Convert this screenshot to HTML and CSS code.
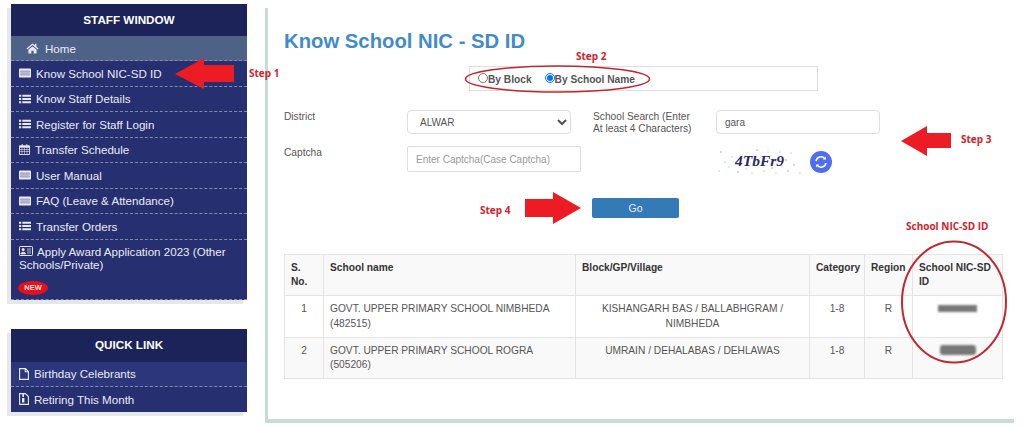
FILE: index.html
```html
<!DOCTYPE html>
<html lang="en">
<head>
   <meta charset="utf-8">
   <meta content="width=device-width, initial-scale=1.0" name="viewport">
   <title>Know School NIC - SD ID</title>
   <link rel="stylesheet" href="styles.css">
</head>
<body>
   <svg class="icon-defs" width="0" height="0">
      <symbol id="i-home" viewBox="0 0 16 14">
         <path d="M8 0.5 L0.3 7 L1.3 8.2 L8 2.6 L14.7 8.2 L15.7 7 L13 4.7 V1 H11 V3 Z M2.8 8.6 V13.5 H6.5 V9.8 H9.5 V13.5 H13.2 V8.6 L8 4.3 Z" fill="currentColor"/>
      </symbol>
      <symbol id="i-card" viewBox="0 0 13 10">
         <rect x="0" y="0" width="13" height="10" rx="1" fill="currentColor"/>
         <path d="M1.2 3 H11.8 M1.2 5 H11.8 M1.2 7 H11.8" stroke="#6a7197" stroke-width="0.9"/>
      </symbol>
      <symbol id="i-list" viewBox="0 0 13 10">
         <path d="M0 0.3 H2.4 V2.5 H0 Z M0 3.9 H2.4 V6.1 H0 Z M0 7.5 H2.4 V9.7 H0 Z M3.6 0.3 H13 V2.5 H3.6 Z M3.6 3.9 H13 V6.1 H3.6 Z M3.6 7.5 H13 V9.7 H3.6 Z" fill="currentColor"/>
      </symbol>
      <symbol id="i-calendar" viewBox="0 0 12 12">
         <path d="M0.5 2 H11.5 V11.5 H0.5 Z" fill="none" stroke="currentColor"/>
         <path d="M0.5 2 H11.5 V4 H0.5 Z M3 0 H4 V2.5 H3 Z M8 0 H9 V2.5 H8 Z" fill="currentColor"/>
         <path d="M0.5 6 H11.5 M0.5 8.2 H11.5 M3.2 4 V11.5 M6 4 V11.5 M8.8 4 V11.5" stroke="currentColor" stroke-width="0.6"/>
      </symbol>
      <symbol id="i-id" viewBox="0 0 14 10">
         <rect x="0.5" y="0.5" width="13" height="9" rx="0.8" fill="none" stroke="currentColor"/>
         <circle cx="4.2" cy="3.6" r="1.5" fill="currentColor"/>
         <path d="M1.8 8 C1.8 5.6 6.6 5.6 6.6 8 Z M8 3 H12 M8 5 H12 M8 7 H12" fill="currentColor" stroke="currentColor" stroke-width="0.7"/>
      </symbol>
      <symbol id="i-file" viewBox="0 0 10 12">
         <path d="M0.6 0.6 H6.4 L9.4 3.6 V11.4 H0.6 Z M6.2 0.8 V3.8 H9.2" fill="none" stroke="currentColor" stroke-width="1.1"/>
      </symbol>
      <symbol id="i-file-zip" viewBox="0 0 10 12">
         <path d="M0.6 0.6 H6.4 L9.4 3.6 V11.4 H0.6 Z" fill="none" stroke="currentColor" stroke-width="1.1"/>
         <path d="M3.4 1 H5 V4 H3.4 Z M3 5 H5.4 V9.6 H3 Z" fill="currentColor"/>
      </symbol>
   </svg>

   <div class="page">
      <aside class="sidebar">
         <div class="panel">
            <div class="panel-title">STAFF WINDOW</div>
            <a class="menu-item menu-home"><svg class="ico ico-home"><use href="#i-home"/></svg>Home</a>
            <a class="menu-item"><svg class="ico"><use href="#i-card"/></svg>Know School NIC-SD ID</a>
            <a class="menu-item"><svg class="ico"><use href="#i-list"/></svg>Know Staff Details</a>
            <a class="menu-item"><svg class="ico"><use href="#i-list"/></svg>Register for Staff Login</a>
            <a class="menu-item"><svg class="ico ico-cal"><use href="#i-calendar"/></svg>Transfer Schedule</a>
            <a class="menu-item"><svg class="ico"><use href="#i-card"/></svg>User Manual</a>
            <a class="menu-item"><svg class="ico"><use href="#i-card"/></svg>FAQ (Leave &amp; Attendance)</a>
            <a class="menu-item"><svg class="ico"><use href="#i-list"/></svg>Transfer Orders</a>
            <a class="menu-apply">
               <svg class="ico ico-id"><use href="#i-id"/></svg>Apply Award Application 2023 (Other Schools/Private)
               <span class="new-badge">NEW</span>
            </a>
         </div>
         <div class="panel">
            <div class="panel-title panel-title-quick">QUICK LINK</div>
            <a class="menu-item menu-quick menu-first"><svg class="ico ico-file"><use href="#i-file"/></svg>Birthday Celebrants</a>
            <a class="menu-item menu-quick"><svg class="ico ico-file"><use href="#i-file-zip"/></svg>Retiring This Month</a>
         </div>
      </aside>

      <main class="main">
         <h2 class="title">Know School NIC - SD ID</h2>
         <div class="radio-box">
            <label class="radio-label"><input type="radio" name="mode">By Block</label>
            <label class="radio-label"><input type="radio" name="mode" checked>By School Name</label>
         </div>

         <form class="search-form">
            <label class="field-label">District</label>
            <select class="field field-select"><option>ALWAR</option></select>
            <label class="field-label field-label-wrap">School Search (Enter At least 4 Characters)</label>
            <input class="field" type="text" value="gara">
            <label class="field-label">Captcha</label>
            <input class="field field-captcha" type="text" placeholder="Enter Captcha(Case Captcha)">
            <div class="captcha-wrap">
               <div class="captcha-img">
                  <svg class="captcha-dots" width="87" height="29">
                     <g fill="#8b8fa8">
                        <circle cx="5" cy="5" r=".7"/><circle cx="9" cy="15" r=".6"/><circle cx="3" cy="24" r=".6"/><circle cx="16" cy="10" r=".5"/>
                        <circle cx="22" cy="25" r=".7"/><circle cx="30" cy="22" r=".6"/><circle cx="41" cy="3" r=".7"/><circle cx="48" cy="24" r=".6"/>
                        <circle cx="56" cy="21" r=".7"/><circle cx="64" cy="5" r=".6"/><circle cx="70" cy="13" r=".7"/><circle cx="75" cy="6" r=".6"/>
                        <circle cx="78" cy="18" r=".7"/><circle cx="72" cy="24" r=".7"/><circle cx="84" cy="26" r=".6"/><circle cx="60" cy="26" r=".5"/>
                        <circle cx="36" cy="26" r=".5"/><circle cx="13" cy="20" r=".5"/><circle cx="66" cy="19" r=".5"/><circle cx="52" cy="5" r=".5"/>
                     </g>
                  </svg>
                  <span class="captcha-text">4TbFr9</span>
               </div>
               <button class="refresh" type="button">
                  <svg width="14" height="14" viewBox="0 0 14 14" fill="none" stroke="#fff" stroke-width="1.5">
                     <path d="M2 6 A5 5 0 0 1 11 4"/><path d="M12 8 A5 5 0 0 1 3 10"/>
                     <path d="M11.8 1.6 V4.6 H8.8 Z M2.2 12.4 V9.4 H5.2 Z" fill="#fff" stroke="none"/>
                  </svg>
               </button>
            </div>
         </form>

         <button class="go-btn" type="button">Go</button>

         <table class="result">
            <thead>
               <tr>
                  <th class="col-no">S. No.</th>
                  <th class="col-name">School name</th>
                  <th class="col-block">Block/GP/Village</th>
                  <th class="col-cat">Category</th>
                  <th class="col-reg">Region</th>
                  <th>School NIC-SD ID</th>
               </tr>
            </thead>
            <tbody>
               <tr>
                  <td class="center">1</td>
                  <td>GOVT. UPPER PRIMARY SCHOOL NIMBHEDA (482515)</td>
                  <td class="center">KISHANGARH BAS / BALLABHGRAM / NIMBHEDA</td>
                  <td class="center">1-8</td>
                  <td class="center">R</td>
                  <td class="center"><span class="redact redact-a"></span></td>
               </tr>
               <tr class="row-alt">
                  <td class="center">2</td>
                  <td>GOVT. UPPER PRIMARY SCHOOL ROGRA (505206)</td>
                  <td class="center">UMRAIN / DEHALABAS / DEHLAWAS</td>
                  <td class="center">1-8</td>
                  <td class="center">R</td>
                  <td class="center"><span class="redact redact-b"></span></td>
               </tr>
            </tbody>
         </table>
      </main>
   </div>

   <!-- red notes drawn over the screenshot -->
   <svg class="notes" width="1024" height="428">
      <g fill="#ed1c24">
         <path d="M175 74 L204 58 V65 H234 V82 H204 V89 Z"/>
         <path d="M901 141 L927 126 V133 H951 V148 H927 V156 Z"/>
         <path d="M581 208 L553 192 V199 H525 V217 H553 V224 Z"/>
      </g>
      <g fill="none" stroke="#c1272d">
         <ellipse cx="557.5" cy="79" rx="92" ry="13" stroke-width="1.5"/>
         <ellipse cx="954" cy="302" rx="52" ry="60.5" stroke-width="2"/>
      </g>
   </svg>
   <span class="note note-1">Step 1</span>
   <span class="note note-2">Step 2</span>
   <span class="note note-3">Step 3</span>
   <span class="note note-4">Step 4</span>
   <span class="note note-5">School NIC-SD ID</span>
</body>
</html>
```

FILE: styles.css
```css
* {
    margin: 0;
    padding: 0;
    box-sizing: border-box;
}
body {
    position: relative;
    height: 428px;
    overflow: hidden;
    background: #fff;
    font-family: "Liberation Sans", Arial, sans-serif;
}
.icon-defs {
    position: absolute;
}
.page {
    display: flex;
    padding: 4px 0 0 11px;
}

/* sidebar */
.sidebar {
    width: 236px;
    display: flex;
    flex-direction: column;
    gap: 29px;
}
.panel {
    background: #262f70;
    box-shadow: -4px 4px 0 #e6e8e8;
    color: #e9ebf4;
    font-size: 11.6px;
}
.panel-title {
    height: 32px;
    line-height: 32px;
    text-align: center;
    background: #1b2359;
    color: #fff;
    font-size: 11.7px;
    font-weight: bold;
}
.panel-title-quick {
    height: 33px;
    line-height: 31px;
}
.menu-item {
    display: flex;
    align-items: center;
    height: 25.5px;
    padding-left: 8px;
    border-bottom: 1px dashed #8389ad;
}
.menu-home {
    height: 25px;
    padding-left: 15px;
    background: #4d6286;
}
.ico {
    width: 12px;
    height: 10px;
    margin-right: 5px;
    flex: none;
}
.ico-home {
    width: 13px;
    height: 11px;
    margin-right: 6px;
}
.ico-cal {
    width: 11px;
    height: 11px;
}
.ico-id {
    width: 14px;
    height: 10px;
    margin-right: 4px;
}
.ico-file {
    width: 10px;
    height: 12px;
    margin-right: 5px;
}
.menu-quick {
    height: 25px;
    padding-left: 8px;
}
.menu-first {
    background: #2c367a;
}
.menu-quick:last-child {
    border-bottom: 0;
}
.menu-apply {
    display: block;
    height: 60px;
    padding: 5px 8px 0;
    line-height: 13.5px;
    border-bottom: 1px dashed #8389ad;
}
.new-badge {
    display: block;
    width: 30px;
    height: 14px;
    margin: 9px 0 0 -1px;
    line-height: 14px;
    text-align: center;
    border-radius: 50%;
    background: #e2111c;
    color: #fbdcdc;
    font-size: 7.5px;
    font-weight: bold;
}

/* main area */
.main {
    width: 749px;
    height: 415px;
    margin: 4px 0 0 18px;
    padding-left: 16px;
    border-left: 3px solid #c6ddd6;
    border-bottom: 4px solid #c6ddd6;
}
.title {
    margin-top: 21px;
    color: #428bca;
    font-size: 20.3px;
    line-height: 24px;
    font-weight: bold;
}
.radio-box {
    display: flex;
    align-items: center;
    gap: 13px;
    width: 349px;
    height: 25px;
    margin: 13px 0 0 185px;
    padding: 1px 0 0 8px;
    border: 1px solid #ddd;
    color: #555;
    font-size: 10.2px;
    font-weight: bold;
}
.radio-label {
    display: flex;
    align-items: center;
}
.radio-label input {
    width: 10px;
    height: 10px;
    margin: -3px 0 0;
}
.search-form {
    display: grid;
    grid-template-columns: 123px 186px 123px 1fr;
    grid-template-rows: 24px 30px;
    row-gap: 12px;
    margin-top: 19px;
}
.field-label {
    padding-top: 1px;
    color: #555;
    font-size: 10.2px;
    line-height: 12px;
}
.field-label-wrap {
    padding-right: 16px;
}
.field {
    width: 164px;
    height: 24px;
    padding: 0 8px;
    border: 1px solid #ddd;
    border-radius: 4px;
    background: #fff;
    color: #555;
    font-family: inherit;
    font-size: 10px;
}
.field-captcha {
    width: 174px;
    height: 26px;
    border-radius: 2px;
    grid-column: 2 / 4;
}
.field-captcha::placeholder {
    color: #999;
}
.captcha-wrap {
    display: flex;
    align-items: center;
    gap: 7px;
    grid-column: 4;
    margin-top: 1px;
    height: 29px;
}
.captcha-img {
    position: relative;
    width: 87px;
    height: 29px;
    text-align: center;
}
.captcha-dots {
    position: absolute;
    left: 0;
    top: 0;
}
.captcha-text {
    position: relative;
    color: #2b2a63;
    font-family: "Liberation Serif", serif;
    font-size: 15.5px;
    font-style: italic;
    font-weight: bold;
    line-height: 27px;
}
.refresh {
    display: flex;
    align-items: center;
    justify-content: center;
    width: 22px;
    height: 22px;
    border: 0;
    border-radius: 50%;
    background: #4e6ef0;
}
.go-btn {
    display: block;
    width: 87px;
    height: 20px;
    margin: 22px 0 0 308px;
    border: 0;
    border-radius: 2px;
    background: #337ab7;
    color: #e8f0f7;
    font-family: inherit;
    font-size: 10.5px;
}

/* results table */
.result {
    width: 719px;
    margin-top: 36px;
    table-layout: fixed;
    border-collapse: collapse;
    color: #555;
    font-size: 10.2px;
    line-height: 14.2px;
}
.result th,
.result td {
    height: 41px;
    padding: 6px;
    border: 1px solid #e4e4e4;
    text-align: left;
    vertical-align: top;
}
.result th {
    color: #333;
    background: #f9f9f9;
}
.row-alt td {
    background: #f9f9f9;
}
.result td.center {
    text-align: center;
}
.col-no { width: 39px; }
.col-name { width: 252px; }
.col-block { width: 234px; }
.col-cat { width: 55px; }
.col-reg { width: 48px; }
.redact {
    display: inline-block;
    background: #777;
    filter: blur(1px);
}
.redact-a {
    width: 39px;
    height: 7px;
    margin-top: 2px;
}
.redact-b {
    width: 36px;
    height: 10px;
    margin-top: 1px;
    border-radius: 3px;
}

/* red notes over the page */
.notes {
    position: absolute;
    left: 0;
    top: 0;
    pointer-events: none;
}
.note {
    position: absolute;
    color: #d2232a;
    font-family: "Open Sans", sans-serif;
    font-size: 10px;
    font-weight: bold;
    line-height: 14px;
    white-space: nowrap;
}
.note-1 { left: 249px; top: 66px; }
.note-2 { left: 576px; top: 49px; }
.note-3 { left: 961px; top: 132px; }
.note-4 { left: 480px; top: 203px; }
.note-5 { left: 906px; top: 219px; }
```
